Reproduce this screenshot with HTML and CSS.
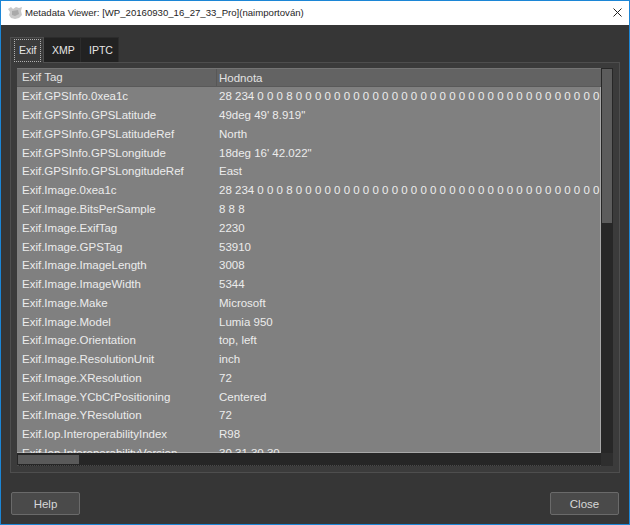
FILE: index.html
```
<!DOCTYPE html>
<html lang="cs">
<head>
<meta charset="utf-8">
<title>Metadata Viewer</title>
<link rel="stylesheet" href="styles.css">
</head>
<body>
<div class="window">
  <div class="titlebar">
    <svg class="app-icon" width="16" height="14" viewBox="0 0 16 14">
      <path d="M1 3 L4 1 L6 3 L9 1 L12 2 L15 1 L14 5 L15 9 L12 12 L8 13 L4 12 L2 9 L3 6 Z" fill="#c9c9c9"/>
      <path d="M5 5 L11 4 L12 8 L8 10 L5 9 Z" fill="#a9a9a9"/>
    </svg>
    <span class="title">Metadata Viewer: [WP_20160930_16_27_33_Pro](naimportován)</span>
    <svg class="close-x" width="9" height="9" viewBox="0 0 9 9">
      <path d="M0.5 0.5 L8.5 8.5 M8.5 0.5 L0.5 8.5" stroke="#222" stroke-width="1"/>
    </svg>
  </div>
  <div class="content">
    <div class="notebook">
      <div class="tabs">
        <div class="tab active"><span class="focus">Exif</span></div>
        <div class="tab">XMP</div>
        <div class="tab">IPTC</div>
      </div>
      <div class="panel">
        <div class="scrolled">
          <div class="tree">
            <div class="head">
              <div class="c1">Exif Tag</div>
              <div class="c2">Hodnota</div>
            </div>
            <div class="row"><div class="c1">Exif.GPSInfo.0xea1c</div><div class="c2">28 234 0 0 0 8 0 0 0 0 0 0 0 0 0 0 0 0 0 0 0 0 0 0 0 0 0 0 0 0 0 0 0 0 0 0 0 0 0 0 0 0</div></div>
            <div class="row"><div class="c1">Exif.GPSInfo.GPSLatitude</div><div class="c2">49deg 49' 8.919"</div></div>
            <div class="row"><div class="c1">Exif.GPSInfo.GPSLatitudeRef</div><div class="c2">North</div></div>
            <div class="row"><div class="c1">Exif.GPSInfo.GPSLongitude</div><div class="c2">18deg 16' 42.022"</div></div>
            <div class="row"><div class="c1">Exif.GPSInfo.GPSLongitudeRef</div><div class="c2">East</div></div>
            <div class="row"><div class="c1">Exif.Image.0xea1c</div><div class="c2">28 234 0 0 0 8 0 0 0 0 0 0 0 0 0 0 0 0 0 0 0 0 0 0 0 0 0 0 0 0 0 0 0 0 0 0 0 0 0 0 0 0</div></div>
            <div class="row"><div class="c1">Exif.Image.BitsPerSample</div><div class="c2">8 8 8</div></div>
            <div class="row"><div class="c1">Exif.Image.ExifTag</div><div class="c2">2230</div></div>
            <div class="row"><div class="c1">Exif.Image.GPSTag</div><div class="c2">53910</div></div>
            <div class="row"><div class="c1">Exif.Image.ImageLength</div><div class="c2">3008</div></div>
            <div class="row"><div class="c1">Exif.Image.ImageWidth</div><div class="c2">5344</div></div>
            <div class="row"><div class="c1">Exif.Image.Make</div><div class="c2">Microsoft</div></div>
            <div class="row"><div class="c1">Exif.Image.Model</div><div class="c2">Lumia 950</div></div>
            <div class="row"><div class="c1">Exif.Image.Orientation</div><div class="c2">top, left</div></div>
            <div class="row"><div class="c1">Exif.Image.ResolutionUnit</div><div class="c2">inch</div></div>
            <div class="row"><div class="c1">Exif.Image.XResolution</div><div class="c2">72</div></div>
            <div class="row"><div class="c1">Exif.Image.YCbCrPositioning</div><div class="c2">Centered</div></div>
            <div class="row"><div class="c1">Exif.Image.YResolution</div><div class="c2">72</div></div>
            <div class="row"><div class="c1">Exif.Iop.InteroperabilityIndex</div><div class="c2">R98</div></div>
            <div class="row"><div class="c1">Exif.Iop.InteroperabilityVersion</div><div class="c2">30 31 30 30</div></div>
          </div>
          <div class="vscroll"><div class="vthumb"></div></div>
          <div class="hscroll"><div class="hthumb"></div></div>
          <div class="corner"></div>
        </div>
      </div>
    </div>
    <div class="footer">
      <button class="btn help">Help</button>
      <button class="btn close">Close</button>
    </div>
  </div>
</div>
</body>
</html>
```
FILE: styles.css
```
html, body {
  margin: 0;
  padding: 0;
}
body {
  width: 630px;
  height: 525px;
  overflow: hidden;
  font-family: "Liberation Sans", Arial, sans-serif;
}
.window {
  box-sizing: border-box;
  width: 630px;
  height: 525px;
  border: 1px solid #1c86d6;
  background: #363636;
  display: flex;
  flex-direction: column;
}
.titlebar {
  height: 24px;
  flex: none;
  background: #ffffff;
  display: flex;
  align-items: center;
  padding-left: 6px;
  padding-right: 7px;
}
.app-icon {
  flex: none;
  margin-top: -1px;
}
.title {
  margin-left: 2px;
  font-size: 9.6px;
  color: #1e1e1e;
  flex: 1;
  white-space: nowrap;
  margin-top: -2px;
}
.close-x {
  flex: none;
  margin-top: -2px;
}
.content {
  flex: 1;
  padding: 12px 10px 0 9px;
  display: flex;
  flex-direction: column;
}
.notebook {
  display: flex;
  flex-direction: column;
}
.tabs {
  display: flex;
  height: 25px;
}
.tab {
  box-sizing: border-box;
  height: 25px;
  font-size: 10.5px;
  color: #e6e6e6;
  background: #222222;
  border-top: 1px solid #2c2c2c;
  border-right: 1px solid #2c2c2c;
  display: flex;
  align-items: center;
  padding: 0 8px;
}
.tab:nth-child(2) {
  width: 37px;
  padding-left: 8px;
}
.tab:nth-child(3) {
  width: 38px;
  padding-left: 8px;
}
.tab.active {
  width: 34px;
  background: #3b3b3b;
  border: 1px solid #4e4e4e;
  border-bottom: none;
  padding: 0 2px 0 3px;
  margin-bottom: -1px;
  height: 26px;
  position: relative;
  z-index: 1;
}
.focus {
  display: block;
  box-sizing: border-box;
  width: 29px;
  height: 23px;
  line-height: 21px;
  padding-left: 4px;
  border: 1px dotted #b0b0b0;
}
.panel {
  box-sizing: border-box;
  width: 610px;
  height: 411px;
  border: 1px solid #4e4e4e;
  background: #3b3b3b;
  padding: 5px 6px 6px 6px;
}
.scrolled {
  display: grid;
  grid-template-columns: 584px 12px;
  grid-template-rows: 385px 13px;
}
.tree {
  background: #808080;
  overflow: hidden;
  font-size: 11.5px;
  color: #ececec;
  box-shadow: inset -1px -1px 0 #a8a8a8;
}
.head {
  display: flex;
  height: 19px;
  box-sizing: border-box;
  background: #636363;
  border-top: 1px solid #747474;
  border-bottom: 1px solid #595959;
  align-items: center;
  color: #e2e2e2;
}
.head .c1 {
  border-right: 1px solid #575757;
  height: 17px;
  line-height: 17px;
}
.row {
  display: flex;
  height: 18.78px;
  align-items: center;
  white-space: nowrap;
}
.c1 {
  flex: none;
  box-sizing: border-box;
  width: 200px;
  padding-left: 5px;
  white-space: nowrap;
}
.c2 {
  padding-left: 2px;
  white-space: nowrap;
}
.vscroll {
  background: #272727;
  padding: 1px 1px 0 1px;
  box-sizing: border-box;
}
.vthumb {
  height: 154px;
  background: #5c5c5c;
}
.hscroll {
  background: #262626;
  box-sizing: border-box;
  padding: 2px 0 1px 1px;
  border-bottom: 1px dotted #4a4a4a;
}
.hthumb {
  width: 61px;
  height: 100%;
  background: #5a5a5a;
}
.corner {
  background: #2e2e2e;
}
.footer {
  display: flex;
  justify-content: space-between;
  margin-top: 19px;
  padding-left: 1px;
}
.btn {
  box-sizing: border-box;
  height: 23px;
  background: #4a4a4a;
  border: 1px solid #6a6a6a;
  border-radius: 2px;
  color: #d8d8d8;
  font-family: "Liberation Sans", Arial, sans-serif;
  font-size: 11.5px;
  padding: 0;
}
.help {
  width: 69px;
}
.close {
  width: 69px;
}
```
